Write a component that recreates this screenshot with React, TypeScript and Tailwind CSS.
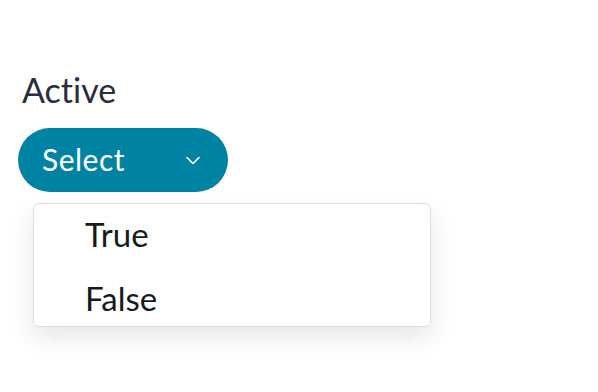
import React from "react";

export default function App() {
  return (
    <div className="w-[598px] h-[392px] bg-white" style={{ fontFamily: "Lato, 'Noto Sans', sans-serif", fontVariantLigatures: "none" }}>
      <div className="pl-[18px] pt-[70px]">
        <div className="pl-[4px] text-[34px] leading-[40px] text-[#2b2d3a]">Active</div>
        <div className="relative mt-[18px]">
          <button className="flex items-center justify-between w-[210px] h-[64px] rounded-full bg-[#0083a3] pl-[24px] pr-[28px] pb-[2px] text-white text-[30px] tracking-[0.5px]">
            <span>Select</span>
            <svg width="14" height="9" viewBox="0 0 14 9" fill="none" className="mt-[2px]">
              <path d="M1 1.5 L7 7.5 L13 1.5" stroke="white" strokeWidth="1.6" strokeLinecap="round" strokeLinejoin="round" />
            </svg>
          </button>
          <div className="absolute left-[15px] top-[75px] w-[398px] h-[124px] flex flex-col gap-[24px] pt-[10px] rounded-[6px] border border-[#dcdfe3] bg-white shadow-[0_10px_24px_rgba(0,0,0,0.10)]">
            <div className="leading-[40px] pl-[51px] text-[33px] text-[#16191c]">True</div>
            <div className="leading-[40px] pl-[51px] text-[33px] text-[#16191c]">False</div>
          </div>
        </div>
      </div>
    </div>
  );
}
